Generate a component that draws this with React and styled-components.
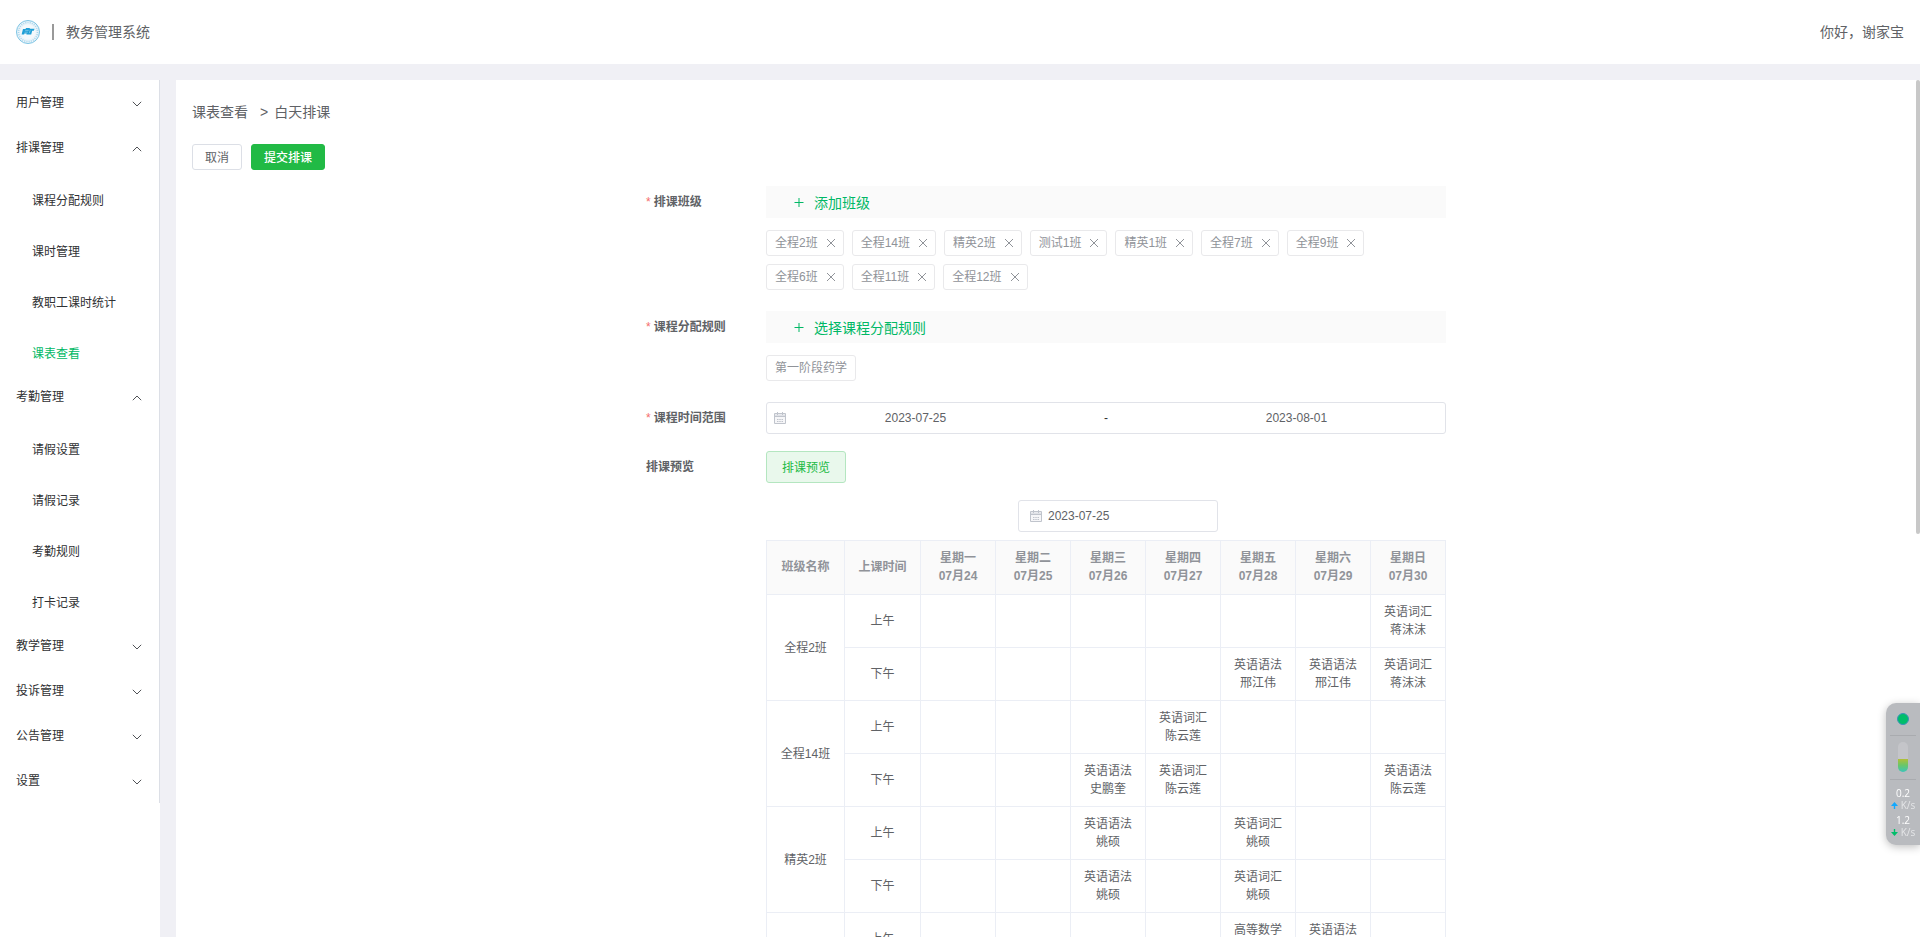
import React from 'react';
import styled, { createGlobalStyle } from 'styled-components';

const GlobalStyle = createGlobalStyle`
  * {
    box-sizing: border-box;
  }
  body {
    margin: 0;
    overflow: hidden;
    background: #f0f0f5;
    color: #606266;
    font-family: "Liberation Sans", "Noto Sans CJK SC", sans-serif;
    font-size: 12px;
  }
  button, input {
    font: inherit;
  }
`

/* Layout */

const Page = styled.div`
  display: flex;
  flex-direction: column;
  gap: 16px;
  height: 100vh;
`
const Header = styled.header`
  display: flex;
  align-items: center;
  flex: none;
  height: 64px;
  padding: 0 16px;
  background: #fff;
  font-size: 14px;
`
const Divider = styled.span`
  width: 2px;
  height: 16px;
  margin: 0 12px;
  background: #999;
`
const HeaderText = styled.span`
  padding-bottom: 2px;
`
const Greeting = styled(HeaderText)`
  margin-left: auto;
`
const Body = styled.div`
  display: flex;
  flex: 1;
  gap: 16px;
  min-height: 0;
`
const Sidebar = styled.aside`
  flex: none;
  width: 160px;
  background: #fff;
`
const Main = styled.main`
  position: relative;
  flex: 1;
  min-width: 0;
  overflow: hidden;
  padding: 16px 20px 16px 16px;
  background: #fff;
`
const ScrollThumb = styled.div`
  position: absolute;
  top: 0;
  right: 0;
  width: 4px;
  height: 53%;
  border-radius: 2px;
  background: #c8c8c8;
`

/* Side menu */

const Menu = styled.nav`
  border-right: 1px solid #dcdfe6;
`
const MenuTitle = styled.button`
  display: flex;
  align-items: center;
  justify-content: space-between;
  width: 100%;
  height: 45px;
  padding: 0 17px 2px 16px;
  border: 0;
  background: none;
  color: #303133;
  cursor: pointer;

  svg {
    margin-top: 4px;
  }
`
const SubMenu = styled.div`
  display: flex;
  flex-direction: column;
  gap: 11px;
  padding-top: 11px;
`
const MenuLink = styled.a`
  padding-left: 32px;
  line-height: 40px;
  color: ${props => props.$active ? '#00b865' : '#303133'};
  text-decoration: none;
`

/* Page head */

const Breadcrumb = styled.div`
  display: flex;
  font-size: 14px;
  line-height: 32px;
`
const Arrow = styled.span`
  margin: 0 6px 0 12px;
`
const Actions = styled.div`
  display: flex;
  gap: 9px;
  margin: 16px 0;
`
const Button = styled.button`
  height: 26px;
  padding: 0 12px 2px;
  border: 1px solid #dcdfe6;
  border-radius: 3px;
  background: #fff;
  color: #606266;
  cursor: pointer;
`
const PrimaryButton = styled(Button)`
  border-color: #21ba45;
  background: #21ba45;
  color: #fff;
  font-weight: 500;
`
const PreviewButton = styled(Button)`
  height: 32px;
  padding: 0 15px 2px;
  border-color: #b4e6c0;
  background: #e9f8ec;
  color: #21ba45;
`

/* Form */

const Form = styled.form`
  width: 800px;
  max-width: 100%;
  margin: 0 auto;
`
const FormItem = styled.div`
  display: flex;
  margin-bottom: 17px;
`
const Label = styled.label`
  flex: none;
  width: 120px;
  font-weight: 700;
  line-height: 32px;
`
const Required = styled.span`
  margin-right: 3px;
  color: #f56c6c;
  font-weight: 400;
`
const Content = styled.div`
  flex: 1;
  min-width: 0;
`
const AddBar = styled.button`
  display: flex;
  align-items: center;
  gap: 8px;
  width: 100%;
  height: 32px;
  padding: 0 26px;
  border: 0;
  background: #fafafa;
  color: #00b865;
  font-size: 14px;
  cursor: pointer;
`
const Tags = styled.div`
  display: flex;
  flex-wrap: wrap;
  gap: 8px;
  padding: 12px 0 4px;
`
const Tag = styled.span`
  display: flex;
  align-items: center;
  height: 26px;
  padding: 0 ${props => props.$closable ? '4px' : '8px'} 3px 8px;
  border: 1px solid #e9e9eb;
  border-radius: 3px;
  color: #909399;
`
const TagClose = styled.button`
  display: flex;
  align-items: center;
  justify-content: center;
  width: 16px;
  height: 16px;
  margin: 2px 0 0 5px;
  padding: 0;
  border: 0;
  background: none;
  color: #909399;
  cursor: pointer;
`
const DateBox = styled.div`
  display: flex;
  align-items: center;
  height: 32px;
  border: 1px solid #e1e3e9;
  border-radius: 3px;
`
const RangeBox = styled(DateBox)`
  padding: 0 20px 0 6px;
`
const WeekBox = styled(DateBox)`
  gap: 5px;
  width: 200px;
  padding: 0 10px;
`
const DateInput = styled.input`
  flex: 1;
  min-width: 0;
  padding: 0;
  border: 0;
  outline: 0;
  background: none;
  color: #606266;
  text-align: ${props => props.$center ? 'center' : 'left'};
`
const Separator = styled.span`
  flex: none;
  width: 19%;
  color: #303133;
  text-align: center;
`
const WeekRow = styled.div`
  display: flex;
  justify-content: center;
  margin: 17px 0 8px;
  padding-left: 24px;
`

/* Timetable */

const Table = styled.table`
  width: 100%;
  table-layout: fixed;
  border-collapse: separate;
  border-spacing: 0;
  border: solid #ebeef5;
  border-width: 1px 0 0 1px;
  line-height: 18px;
  text-align: center;
`
const Th = styled.th`
  width: ${props => props.$width || 'auto'};
  height: 54px;
  padding: 0 0 2px;
  border: solid #ebeef5;
  border-width: 0 1px 1px 0;
  background: #fafafa;
  color: #909399;
`
const Td = styled.td`
  height: 53px;
  padding: 0;
  border: solid #ebeef5;
  border-width: 0 1px 1px 0;
`

/* Network monitor docked on the right edge */

const Monitor = styled.div`
  position: fixed;
  right: 0;
  bottom: 92px;
  display: flex;
  flex-direction: column;
  align-items: center;
  width: 34px;
  height: 142px;
  padding: 10px 4px 0;
  border-radius: 10px 0 0 10px;
  background: #b9bbbf;
  box-shadow: 0 2px 8px rgba(0, 0, 0, 0.25);
  color: #fff;
  font-family: "Open Sans", sans-serif;
`
const Dot = styled.span`
  width: 12px;
  height: 12px;
  border: 1px solid #3a94b8;
  border-radius: 50%;
  background: #00be6a;
`
const MonitorLine = styled.span`
  width: 100%;
  height: 1px;
  margin: ${props => props.$low ? '7px' : '10px'} 0 6px;
  background: #a9abaf;
`
const Gauge = styled.span`
  width: 10px;
  height: 30px;
  border-radius: 5px;
  background: linear-gradient(#c4c5c9 17px, #b2bf37 17px, #6cc667 23px, #3cc5b8);
`
const Speed = styled.div`
  height: 27px;
  font-size: 10px;
  line-height: 15px;
  text-align: center;
`
const Unit = styled.div`
  display: flex;
  align-items: center;
  gap: 3px;
  color: #e4e5e7;
  line-height: 8px;
`

const Logo = () =>
  <svg width="24" height="24" viewBox="0 0 24 24" aria-hidden="true">
    <circle cx="12" cy="12" r="11.5" fill="#eaf4fa" stroke="#7cc4e4" />
    <circle cx="12" cy="12" r="9.5" fill="none" stroke="#a9d6ec" strokeWidth="1.6" strokeDasharray="1 1.2" />
    <circle cx="12" cy="12" r="7.6" fill="#f4f9fc" />
    <path d="M7 9h2.4l.8-1h3.2l.8.8h4.4l-.8 2h-1.6l-1 3.6h-4.8l.3-1H8.4l-.3 1.2H5.6z" fill="#1f9fd6" />
    <path d="M9.2 10.4h3.4M8.6 12.2h3.2M14.2 10.2l-.9 3" stroke="#a5d8f0" strokeWidth=".6" fill="none" />
  </svg>

const Chevron = ({ up }) =>
  <svg width="10" height="6" viewBox="0 0 10 6" fill="none" stroke="#505256" aria-hidden="true">
    <path d={up ? 'M.8 5.2 5 1l4.2 4.2' : 'M.8.8 5 5 9.2.8'} />
  </svg>

const PlusIcon = () =>
  <svg width="14" height="14" viewBox="0 0 14 14" stroke="currentColor" aria-hidden="true">
    <path d="M2.5 7.5h9M7 3v9" />
  </svg>

const CloseIcon = () =>
  <svg width="10" height="10" viewBox="0 0 10 10" stroke="currentColor" aria-hidden="true">
    <path d="m1 1 8 8M9 1 1 9" />
  </svg>

const CalendarIcon = () =>
  <svg width="14" height="14" viewBox="0 0 14 14" fill="none" stroke="#c0c4cc" aria-hidden="true">
    <path d="M1.5 2.5h11v10h-11z" fill="#f6f6f8" />
    <path d="M2 3.5h10v2H2z" fill="#dfe1e6" stroke="none" />
    <path d="M2 5.5h10M4.5 1v3M9.5 1v3" />
    <path d="M4 8.5h6M4 10.5h6" strokeDasharray="1.5 .75" />
  </svg>

const SpeedArrow = ({ down }) =>
  <svg width="7" height="7" viewBox="0 0 7 7" aria-hidden="true">
    {down
      ? <path d="M2.8 0h1.4v3H7L3.5 7 0 3h2.8z" fill="#00be6a" />
      : <path d="M2.8 7h1.4V4H7L3.5 0 0 4h2.8z" fill="#10a8ff" />}
  </svg>

const menu = [
  { title: '用户管理' },
  { title: '排课管理', children: ['课程分配规则', '课时管理', '教职工课时统计', '课表查看'] },
  { title: '考勤管理', children: ['请假设置', '请假记录', '考勤规则', '打卡记录'] },
  { title: '教学管理' },
  { title: '投诉管理' },
  { title: '公告管理' },
  { title: '设置' },
];

const classes = [
  '全程2班', '全程14班', '精英2班', '测试1班', '精英1班',
  '全程7班', '全程9班', '全程6班', '全程11班', '全程12班',
];

const days = [
  ['星期一', '07月24'],
  ['星期二', '07月25'],
  ['星期三', '07月26'],
  ['星期四', '07月27'],
  ['星期五', '07月28'],
  ['星期六', '07月29'],
  ['星期日', '07月30'],
];

// lessons are keyed by the index of the day
const timetable = [
  {
    name: '全程2班',
    am: { 6: ['英语词汇', '蒋沫沫'] },
    pm: { 4: ['英语语法', '邢江伟'], 5: ['英语语法', '邢江伟'], 6: ['英语词汇', '蒋沫沫'] },
  },
  {
    name: '全程14班',
    am: { 3: ['英语词汇', '陈云莲'] },
    pm: { 2: ['英语语法', '史鹏奎'], 3: ['英语词汇', '陈云莲'], 6: ['英语语法', '陈云莲'] },
  },
  {
    name: '精英2班',
    am: { 2: ['英语语法', '姚硕'], 4: ['英语词汇', '姚硕'] },
    pm: { 2: ['英语语法', '姚硕'], 4: ['英语词汇', '姚硕'] },
  },
  {
    name: '测试1班',
    am: { 4: ['高等数学', '史鹏奎'], 5: ['英语语法', '姚硕'] },
    pm: {},
  },
];

const Lessons = ({ lessons }) =>
  days.map((day, i) =>
    <Td key={day[0]}>
      {lessons[i] && <>{lessons[i][0]}<br />{lessons[i][1]}</>}
    </Td>
  )

const Timetable = () =>
  <Table>
    <thead>
      <tr>
        <Th $width="78px">班级名称</Th>
        <Th $width="76px">上课时间</Th>
        {days.map(([week, date]) => <Th key={week}>{week}<br />{date}</Th>)}
      </tr>
    </thead>
    <tbody>
      {timetable.map(row =>
        <React.Fragment key={row.name}>
          <tr>
            <Td rowSpan={2}>{row.name}</Td>
            <Td>上午</Td>
            <Lessons lessons={row.am} />
          </tr>
          <tr>
            <Td>下午</Td>
            <Lessons lessons={row.pm} />
          </tr>
        </React.Fragment>
      )}
    </tbody>
  </Table>

const SideMenu = () =>
  <Sidebar>
    <Menu>
      {menu.map(({ title, children }) =>
        <div key={title}>
          <MenuTitle type="button" aria-expanded={!!children}>
            {title}
            <Chevron up={!!children} />
          </MenuTitle>
          {children &&
            <SubMenu>
              {children.map(item =>
                <MenuLink key={item} href="#" $active={item === '课表查看'}>{item}</MenuLink>
              )}
            </SubMenu>}
        </div>
      )}
    </Menu>
  </Sidebar>

const ScheduleForm = () =>
  <Form>
    <FormItem>
      <Label htmlFor="add-class"><Required>*</Required>排课班级</Label>
      <Content>
        <AddBar id="add-class" type="button"><PlusIcon />添加班级</AddBar>
        <Tags>
          {classes.map(name =>
            <Tag key={name} $closable>
              {name}
              <TagClose type="button" aria-label="close"><CloseIcon /></TagClose>
            </Tag>
          )}
        </Tags>
      </Content>
    </FormItem>
    <FormItem>
      <Label htmlFor="add-rule"><Required>*</Required>课程分配规则</Label>
      <Content>
        <AddBar id="add-rule" type="button"><PlusIcon />选择课程分配规则</AddBar>
        <Tags><Tag>第一阶段药学</Tag></Tags>
      </Content>
    </FormItem>
    <FormItem>
      <Label htmlFor="range-start"><Required>*</Required>课程时间范围</Label>
      <Content>
        <RangeBox>
          <CalendarIcon />
          <DateInput id="range-start" $center defaultValue="2023-07-25" />
          <Separator>-</Separator>
          <DateInput aria-label="end" $center defaultValue="2023-08-01" />
        </RangeBox>
      </Content>
    </FormItem>
    <FormItem>
      <Label htmlFor="preview">排课预览</Label>
      <Content>
        <PreviewButton id="preview" type="button">排课预览</PreviewButton>
        <WeekRow>
          <WeekBox>
            <CalendarIcon />
            <DateInput aria-label="week" defaultValue="2023-07-25" />
          </WeekBox>
        </WeekRow>
        <Timetable />
      </Content>
    </FormItem>
  </Form>

const NetMonitor = () =>
  <Monitor>
    <Dot />
    <MonitorLine />
    <Gauge />
    <MonitorLine $low />
    <Speed>0.2<Unit><SpeedArrow />K/s</Unit></Speed>
    <Speed>1.2<Unit><SpeedArrow down />K/s</Unit></Speed>
  </Monitor>

export default function App() {
  return (
    <Page>
      <GlobalStyle />
      <Header>
        <Logo />
        <Divider />
        <HeaderText>教务管理系统</HeaderText>
        <Greeting>你好，谢家宝</Greeting>
      </Header>
      <Body>
        <SideMenu />
        <Main>
          <Breadcrumb>课表查看<Arrow>&gt;</Arrow>白天排课</Breadcrumb>
          <Actions>
            <Button type="button">取消</Button>
            <PrimaryButton type="button">提交排课</PrimaryButton>
          </Actions>
          <ScheduleForm />
          <ScrollThumb />
        </Main>
      </Body>
      <NetMonitor />
    </Page>
  );
}
